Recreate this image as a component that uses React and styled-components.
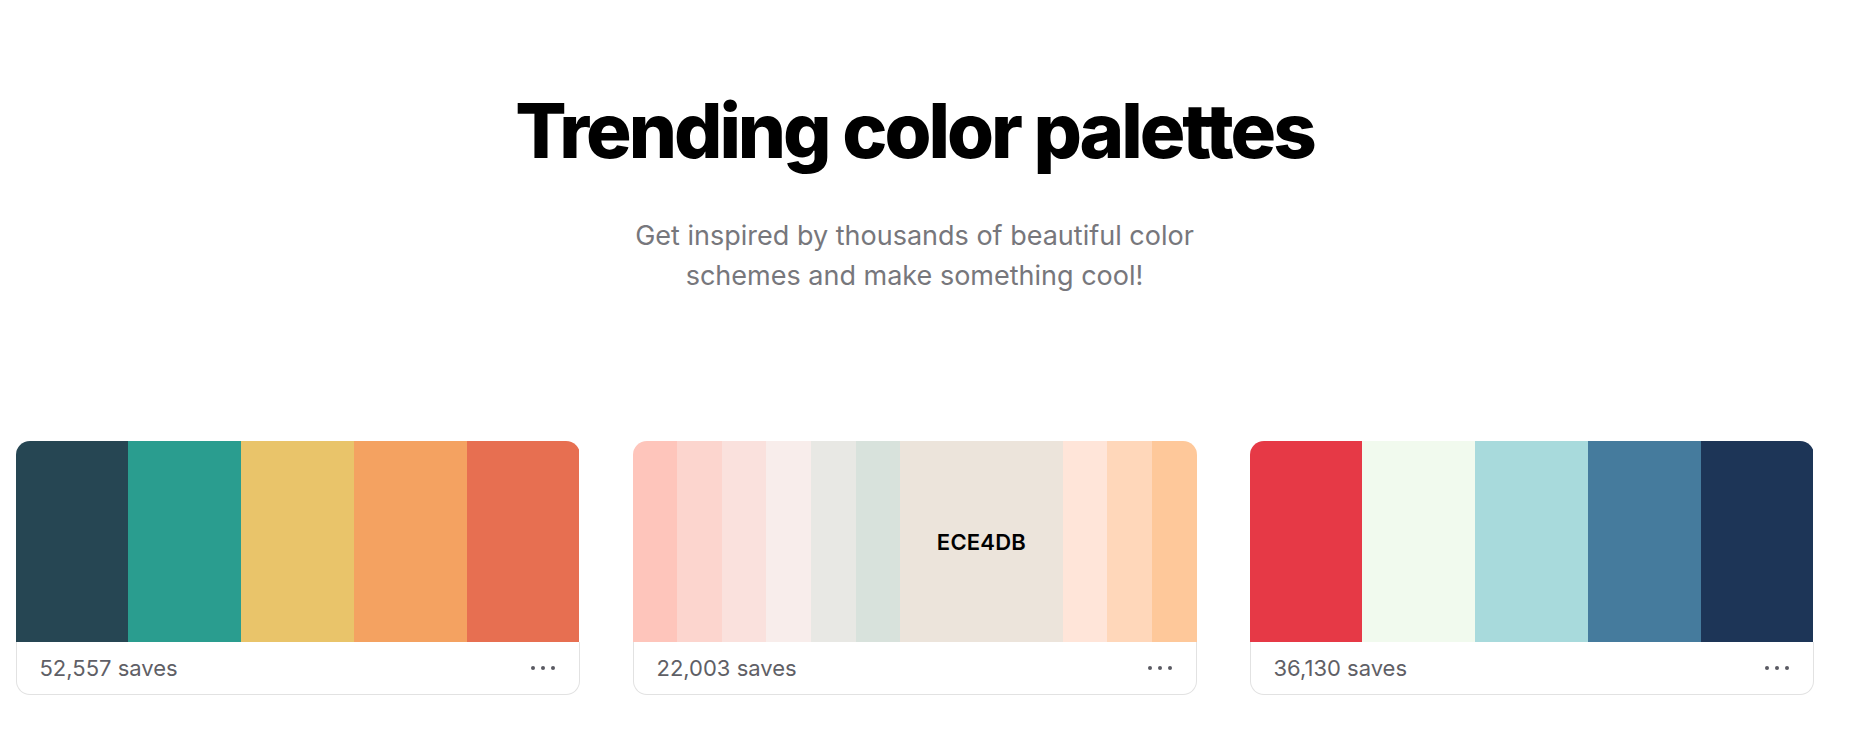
import React from 'react';
import styled, { createGlobalStyle } from 'styled-components';

const GlobalStyle = createGlobalStyle`
  body {
    margin: 0;
    background: #ffffff;
    font-family: Inter, "Noto Sans", sans-serif;
  }
`;

// content is centred a little left of the window, as if a scrollbar took the edge
const Page = styled.main`
  min-height: 729px;
  padding-right: 25px;
  background: #ffffff;
`;

const Hero = styled.header`
  display: flex;
  flex-direction: column;
  align-items: center;
  padding-top: 88px;
`;

const Title = styled.h1`
  margin: 0;
  font-size: 76px;
  line-height: 84px;
  font-weight: 800;
  letter-spacing: -0.04em;
  color: #000000;
`;

const Subtitle = styled.p`
  margin: 44px 0 0;
  max-width: 620px;
  text-align: center;
  font-size: 27px;
  line-height: 40px;
  color: #77777c;
`;

const Grid = styled.section`
  display: grid;
  grid-template-columns: repeat(3, 564px);
  justify-content: center;
  column-gap: 53px;
  margin-top: 145px;
`;

const Card = styled.article`
  display: flex;
  flex-direction: column;
`;

const Swatches = styled.div`
  display: flex;
  height: 201px;
  border-radius: 14px 14px 0 0;
  overflow: hidden;
`;

const Swatch = styled.div`
  flex: ${p => p.$grow || 1};
  display: flex;
  align-items: center;
  justify-content: center;
  background: ${p => p.$color};
`;

const HexLabel = styled.span`
  font-size: 22px;
  font-weight: 600;
  color: #000000;
  letter-spacing: 0.01em;
`;

const Footer = styled.div`
  display: flex;
  align-items: center;
  justify-content: space-between;
  height: 52px;
  padding: 0 24px 0 23px;
  border: 1px solid #e2e2e2;
  border-top: none;
  border-radius: 0 0 14px 14px;
`;

const Saves = styled.span`
  font-size: 22px;
  color: #5f5f66;
`;

const MoreButton = styled.button`
  display: flex;
  align-items: center;
  padding: 0;
  border: none;
  background: none;
  color: #5a5a62;
  cursor: pointer;
`;

const Dots = () => (
  <svg width="24" height="6" viewBox="0 0 24 6" fill="currentColor">
    <circle cx="2" cy="3" r="2" />
    <circle cx="12" cy="3" r="2" />
    <circle cx="22" cy="3" r="2" />
  </svg>
);

const palettes = [
  {
    saves: '52,557',
    colors: ['#264653', '#2a9d8f', '#e9c46a', '#f4a261', '#e76f51'],
  },
  {
    saves: '22,003',
    colors: ['#fec5bb', '#fcd5ce', '#fae1dd', '#f8edeb', '#e8e8e4', '#d8e2dc', '#ece4db', '#ffe5d9', '#ffd7ba', '#fec89a'],
    hovered: 6,
  },
  {
    saves: '36,130',
    colors: ['#e63946', '#f1faee', '#a8dadc', '#457b9d', '#1d3557'],
  },
];

const App = () => (
  <Page>
    <GlobalStyle />
    <Hero>
      <Title>Trending color palettes</Title>
      <Subtitle>Get inspired by thousands of beautiful color schemes and make something cool!</Subtitle>
    </Hero>
    <Grid>
      {palettes.map(p => (
        <Card key={p.saves}>
          <Swatches>
            {p.colors.map((c, i) => (
              <Swatch key={c} $color={c} $grow={i === p.hovered ? 3.64 : 1}>
                {i === p.hovered && <HexLabel>{c.slice(1).toUpperCase()}</HexLabel>}
              </Swatch>
            ))}
          </Swatches>
          <Footer>
            <Saves>{p.saves} saves</Saves>
            <MoreButton aria-label="More options">
              <Dots />
            </MoreButton>
          </Footer>
        </Card>
      ))}
    </Grid>
  </Page>
);

export default App;
